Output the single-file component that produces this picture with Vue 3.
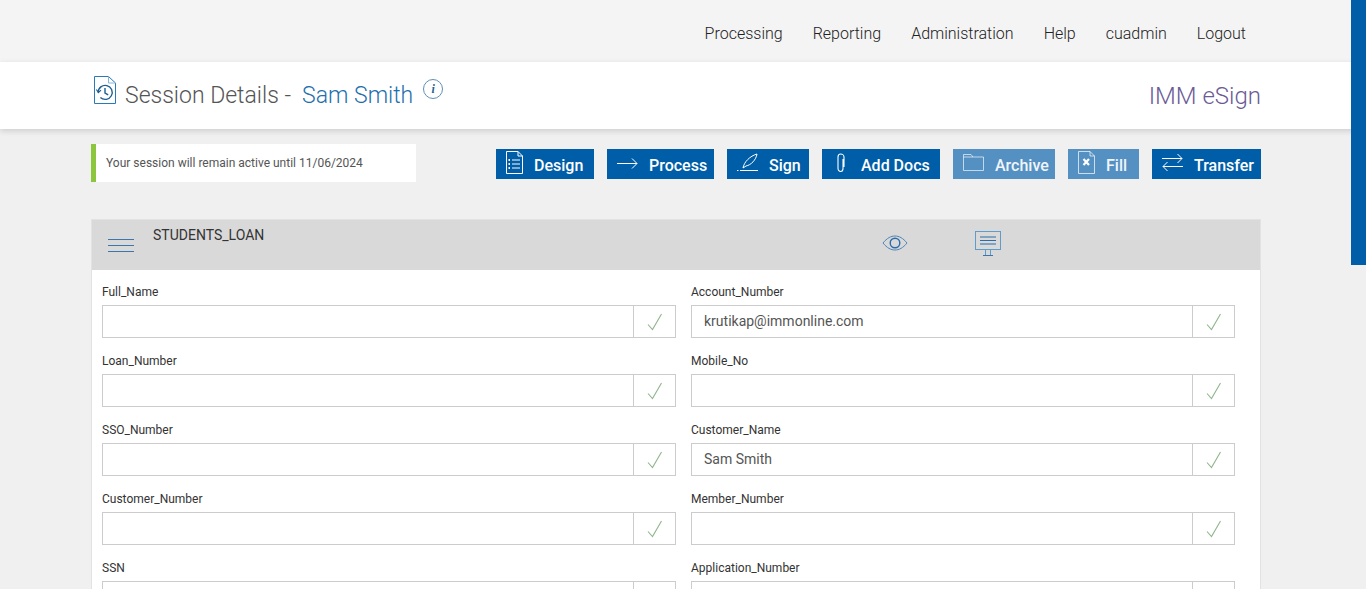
<template>
  <div class="page">
    <!-- top nav -->
    <div class="topbar">
      <nav class="nav">
        <a v-for="item in navItems" :key="item">{{ item }}</a>
      </nav>
    </div>

    <!-- title bar -->
    <div class="titlebar">
      <div class="title-left">
        <svg class="title-icon" width="24" height="30" viewBox="0 0 24 30" fill="none" stroke="#2a7ab8" stroke-width="1">
          <path d="M1.5 1.5H15.5L22.5 8V28.5H1.5Z" />
          <path d="M15.5 1.5V8H22.5" stroke="#8ab4d4" />
          <path d="M5.2 17.5a7 7 0 1 1 2.2 5" stroke-width="1.4" stroke="#1f5f8f" />
          <path d="M3.4 14.5l2 3 2.6-2.4" stroke-width="1.2" stroke="#1f5f8f" />
          <path d="M12 13v5l3.2 1.8" stroke-width="1.4" stroke="#1f5f8f" />
        </svg>
        <span class="title-text">Session Details -</span>
        <span class="title-name">Sam Smith</span>
        <span class="info">i</span>
      </div>
      <div class="brand">IMM eSign</div>
    </div>

    <!-- session + actions -->
    <div class="actionrow">
      <div class="session">Your session will remain active until 11/06/2024</div>
      <div class="actions">
        <button class="btn" style="width: 98px">
          <svg width="17" height="23" viewBox="0 0 17 23" fill="none" stroke="#fff" stroke-width="1">
            <path d="M.5.5H12L16.5 5V22.5H.5Z" /><path d="M12 .5V5H16.5" />
            <path d="M6 9H14M6 13H14M6 17H14" />
            <path d="M2.5 9H4M2.5 13H4M2.5 17H4" stroke-width="2" />
          </svg>
          <span>Design</span>
        </button>
        <button class="btn" style="width: 107px">
          <svg width="21" height="12" viewBox="0 0 21 12" fill="none" stroke="#fff" stroke-width="1">
            <path d="M0 6.5H20M15 1.5L20 6.5L15 11.5" />
          </svg>
          <span>Process</span>
        </button>
        <button class="btn" style="width: 82px">
          <svg width="21" height="19" viewBox="0 0 21 19" fill="none" stroke="#fff" stroke-width="1">
            <path d="M6 15C7 9 13 3 20 1C19 7 14 12 9 13L6 15" />
            <path d="M3 17.5H21" /><path d="M0 17.5H1.5" />
          </svg>
          <span>Sign</span>
        </button>
        <button class="btn" style="width: 118px">
          <svg class="clip" width="10" height="20" viewBox="0 0 10 20" fill="none" stroke="#fff" stroke-width="1.1">
            <path d="M7 6V15.5C7 17 6.2 18.5 4.7 18.5C3.2 18.5 2 17 2 15.5V4C2 2.3 3 1 4.7 1C6.4 1 8 2.3 8 4V14" />
          </svg>
          <span>Add Docs</span>
        </button>
        <button class="btn off" style="width: 102px">
          <svg width="21" height="17" viewBox="0 0 21 17" fill="none" stroke="#fff" stroke-opacity=".65" stroke-width="1">
            <path d="M.5 16.5V.5H8L10 3H20.5V16.5Z" /><path d="M.5 3H10" />
          </svg>
          <span>Archive</span>
        </button>
        <button class="btn off" style="width: 71px">
          <svg width="17" height="23" viewBox="0 0 17 23" fill="none" stroke="#fff" stroke-opacity=".7" stroke-width="1">
            <path d="M.5.5H12L16.5 5V22.5H.5Z" /><path d="M12 .5V5H16.5" />
            <path d="M5.5 8L11 14M11 8L5.5 14" stroke-width="2.2" stroke-opacity="1" />
          </svg>
          <span>Fill</span>
        </button>
        <button class="btn" style="width: 109px">
          <svg width="21" height="19" viewBox="0 0 21 19" fill="none" stroke="#fff" stroke-width="1">
            <path d="M0 5.5H20M15.5 1L20 5.5L15.5 10" />
            <path d="M21 13.5H1M5.5 9L1 13.5L5.5 18" />
          </svg>
          <span>Transfer</span>
        </button>
      </div>
    </div>

    <!-- form panel -->
    <section class="panel">
      <header class="panel-head">
        <svg class="burger" width="26" height="14" viewBox="0 0 26 14" fill="none" stroke="#3d75ad" stroke-width="1">
          <path d="M0 1.5H26M0 7.5H26M0 13.5H26" />
        </svg>
        <span class="panel-title">STUDENTS_LOAN</span>
        <svg class="eye" width="26" height="16" viewBox="0 0 26 16" fill="none" stroke="#4f86b8" stroke-width="1">
          <path d="M1 8C5 3 9 1 13 1S21 3 25 8C21 13 17 15 13 15S5 13 1 8Z" />
          <circle cx="13" cy="8" r="4.8" stroke="#2c6cab" stroke-width="1.4" />
        </svg>
        <svg class="screen" width="26" height="25" viewBox="0 0 26 25" fill="none" stroke="#5f9cc9" stroke-width="1">
          <rect x=".5" y=".5" width="25" height="18" />
          <path d="M5 6H21M5 9.5H21M5 13H21" stroke="#2c6cab" stroke-width="1.2" />
          <path d="M10.5 19V24M15.5 19V24" />
          <path d="M8 24.5H18" stroke="#3d75ad" />
        </svg>
      </header>
      <div class="fields">
        <div v-for="f in fields" :key="f.label" class="field">
          <label>{{ f.label }}</label>
          <div class="input-group">
            <div class="input">{{ f.value }}</div>
            <div class="addon">
              <svg width="16" height="18" viewBox="0 0 16 18" fill="none" stroke="#8fb58c" stroke-width="1.1">
                <path d="M1 11.5L5.5 16.5L14.5 1" />
              </svg>
            </div>
          </div>
        </div>
      </div>
    </section>

    <!-- scroll indicator -->
    <div class="scroll-thumb"></div>
  </div>
</template>

<script setup>
const navItems = ['Processing', 'Reporting', 'Administration', 'Help', 'cuadmin', 'Logout']

const fields = [
  { label: 'Full_Name', value: '' },
  { label: 'Account_Number', value: 'krutikap@immonline.com' },
  { label: 'Loan_Number', value: '' },
  { label: 'Mobile_No', value: '' },
  { label: 'SSO_Number', value: '' },
  { label: 'Customer_Name', value: 'Sam Smith' },
  { label: 'Customer_Number', value: '' },
  { label: 'Member_Number', value: '' },
  { label: 'SSN', value: '' },
  { label: 'Application_Number', value: '' }
]
</script>

<style>
html, body {
  margin: 0;
  overflow: hidden;
  background: #f0f0f0;
}
</style>

<style scoped>
.page {
  position: relative;
  height: 589px;
  overflow: hidden;
  background: #f0f0f0;
  font-family: Roboto, "Liberation Sans", sans-serif;
  color: #444;
}

.topbar {
  height: 62px;
  background: #f4f4f4;
  display: flex;
  justify-content: flex-end;
  padding-right: 120px;
  box-sizing: border-box;
}
.nav {
  display: flex;
  gap: 30px;
  padding-top: 24px;
  font-size: 16px;
  font-weight: 300;
  line-height: 19px;
  color: #222;
}

.titlebar {
  height: 67px;
  background: #fff;
  box-shadow: 0 2px 6px rgba(0, 0, 0, 0.15);
  display: flex;
  justify-content: space-between;
  align-items: center;
  padding: 0 105px 0 93px;
  position: relative;
}
.title-left {
  display: flex;
  align-items: center;
  height: 100%;
}
.title-icon {
  margin: -11px 8px 0 0;
}
.title-text,
.title-name {
  font-size: 23px;
  font-weight: 300;
  line-height: 28px;
  margin-top: 1px;
  color: #555;
}
.title-name {
  color: #1f6fae;
  margin-left: 11px;
}
.info {
  width: 18px;
  height: 18px;
  border: 1px solid #5f8fb8;
  border-radius: 50%;
  margin: -14px 0 0 10px;
  text-align: center;
  font: italic bold 12px/18px "Liberation Serif", serif;
  color: #1f5f8f;
}
.brand {
  font-size: 24px;
  font-weight: 300;
  color: #6b5b95;
  margin-top: 1px;
}

.actionrow {
  display: flex;
  justify-content: space-between;
  padding: 15px 105px 0 91px;
  height: 90px;
  box-sizing: border-box;
}
.session {
  width: 325px;
  height: 38px;
  box-sizing: border-box;
  background: #fff;
  border-left: 5px solid #8cc63f;
  padding-left: 10px;
  font-size: 12px;
  line-height: 38px;
  color: #555;
}
.actions {
  display: flex;
  gap: 13px;
  padding-top: 5px;
}
.btn {
  height: 30px;
  padding: 0 0 0 10px;
  border: 0;
  background: #005ea8;
  color: #fff;
  font-family: inherit;
  font-size: 16px;
  font-weight: 500;
  display: flex;
  align-items: center;
  gap: 11px;
  box-sizing: border-box;
}
.btn span {
  padding-top: 3px;
}
.btn svg {
  flex: none;
  margin-top: -3px;
}
.btn.off {
  background: #5590c2;
  color: #f0f5fa;
}
.clip {
  margin-left: 4px;
  margin-right: 4px;
}

.panel {
  margin: 0 105px 0 91px;
  border: 1px solid #e2e2e2;
  background: #fff;
}
.panel-head {
  height: 50px;
  background: #d9d9d9;
  display: flex;
  position: relative;
}
.burger {
  margin: 18px 0 0 16px;
}
.panel-title {
  margin: 7px 0 0 19px;
  font-size: 14px;
  line-height: 16px;
  color: #333;
}
.eye {
  position: absolute;
  left: 790px;
  top: 15px;
}
.screen {
  position: absolute;
  left: 883px;
  top: 11px;
}

.fields {
  display: grid;
  grid-template-columns: 574px 544px;
  column-gap: 15px;
  row-gap: 16px;
  padding: 15px 0 0 10px;
}
.field label {
  display: block;
  height: 20px;
  font-size: 12px;
  line-height: 14px;
  color: #333;
}
.input-group {
  display: flex;
  height: 33px;
  box-sizing: border-box;
  border: 1px solid #ccc;
}
.input {
  flex: 1;
  padding-left: 12px;
  font-size: 14px;
  line-height: 31px;
  color: #555;
}
.addon {
  width: 41px;
  border-left: 1px solid #ccc;
  display: flex;
  align-items: center;
  justify-content: center;
}

.scroll-thumb {
  position: absolute;
  top: 0;
  right: 0;
  width: 15px;
  height: 265px;
  background: #005ea8;
}
</style>
